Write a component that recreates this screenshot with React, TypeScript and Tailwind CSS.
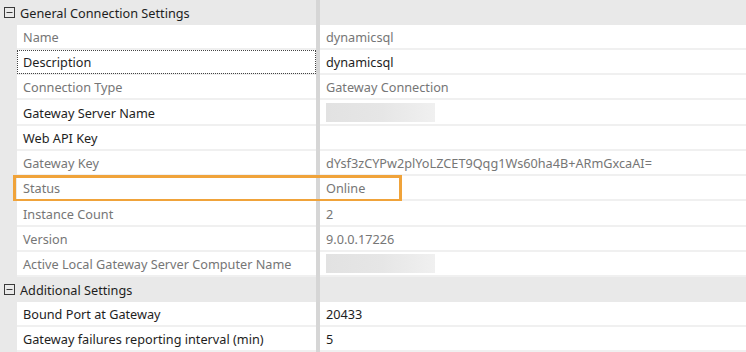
import React from 'react';

type Row = {
  label: string;
  value?: string;
  bold?: boolean;
  blur?: boolean;
  focus?: boolean;
  highlight?: boolean;
  tall?: boolean;
};

const general: Row[] = [
  { label: 'Name', value: 'dynamicsql' },
  { label: 'Description', value: 'dynamicsql', bold: true, focus: true },
  { label: 'Connection Type', value: 'Gateway Connection' },
  { label: 'Gateway Server Name', bold: true, blur: true, tall: true },
  { label: 'Web API Key', bold: true },
  { label: 'Gateway Key', value: 'dYsf3zCYPw2plYoLZCET9Qqg1Ws60ha4B+ARmGxcaAI=' },
  { label: 'Status', value: 'Online', highlight: true },
  { label: 'Instance Count', value: '2', tall: true },
  { label: 'Version', value: '9.0.0.17226' },
  { label: 'Active Local Gateway Server Computer Name', blur: true },
];

const additional: Row[] = [
  { label: 'Bound Port at Gateway', value: '20433', bold: true },
  { label: 'Gateway failures reporting interval (min)', value: '5', bold: true },
];

const MinusBox = () => (
  <svg width="11" height="11" viewBox="0 0 11 11" className="shrink-0">
    <rect x="0.5" y="0.5" width="10" height="10" fill="none" stroke="#3a3a3a" strokeWidth="1" />
    <line x1="2.5" y1="5.5" x2="8.5" y2="5.5" stroke="#3a3a3a" strokeWidth="1" />
  </svg>
);

const Category = ({ title }: { title: string }) => (
  <div className="flex h-[25px] bg-[#e9e9e9]">
    <div className="flex items-center w-[316px] pl-[4px] gap-[5px]">
      <MinusBox />
      <span className="text-[#1e1e1e] pt-[2px]">{title}</span>
    </div>
    <div className="w-[4px] bg-[#d6d6d6]" />
    <div className="flex-1" />
  </div>
);

const PropRow = ({ row }: { row: Row }) => {
  const text = row.bold ? 'text-[#1e1e1e]' : 'text-[#767676]';
  return (
    <div className={`relative flex ${row.tall ? 'h-[26px]' : 'h-[25px]'}`}>
      <div className="w-[17px] bg-[#e9e9e9]" />
      <div className={`relative w-[299px] flex items-center pl-[6px] pt-[2px] border-b-2 border-[#f0f0f0] bg-white ${text}`}>
        {row.label}
        {row.focus && (
          <div className="absolute inset-x-0 top-0 bottom-[-1px] border border-dotted border-[#444]" />
        )}
      </div>
      <div className="w-[4px] bg-[#d6d6d6]" />
      <div className={`flex-1 flex items-center pl-[6px] pt-[2px] border-b-2 border-[#f0f0f0] bg-white ${text}`}>
        {row.blur ? (
          <div className="w-[109px] h-[19px] -mt-[2px] bg-gradient-to-r from-[#e2e2e2] via-[#e6e6e6] to-[#f0f0f0]" />
        ) : (
          row.value
        )}
      </div>
      {row.highlight && (
        <div className="absolute left-[13px] top-[-1px] w-[389px] h-[27px] border-[3px] border-[#f0a33a]" />
      )}
    </div>
  );
};

export default function App() {
  return (
    <div className="w-[746px] h-[352px] overflow-hidden bg-white text-[12.7px] leading-none font-['Noto_Sans','Open_Sans',sans-serif]">
      <Category title="General Connection Settings" />
      {general.map((r) => (
        <PropRow key={r.label} row={r} />
      ))}
      <Category title="Additional Settings" />
      {additional.map((r) => (
        <PropRow key={r.label} row={r} />
      ))}
    </div>
  );
}
